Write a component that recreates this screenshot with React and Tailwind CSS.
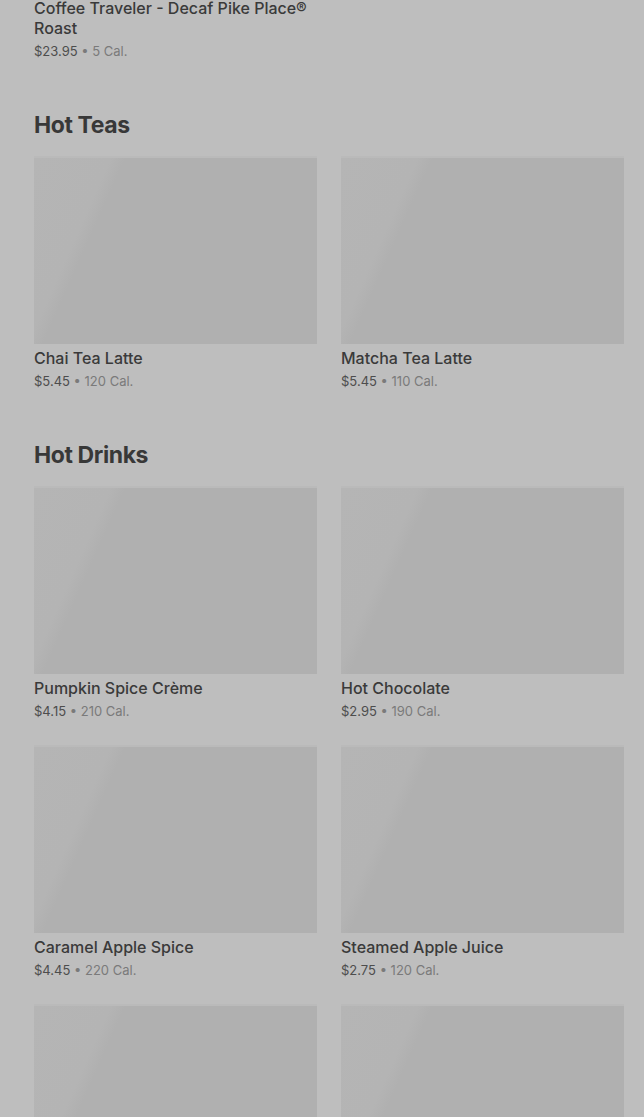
const sections = [
  {
    title: 'Hot Teas',
    items: [
      { name: 'Chai Tea Latte', price: '$5.45', cal: '120 Cal.' },
      { name: 'Matcha Tea Latte', price: '$5.45', cal: '110 Cal.' },
    ],
  },
  {
    title: 'Hot Drinks',
    items: [
      { name: 'Pumpkin Spice Crème', price: '$4.15', cal: '210 Cal.' },
      { name: 'Hot Chocolate', price: '$2.95', cal: '190 Cal.' },
      { name: 'Caramel Apple Spice', price: '$4.45', cal: '220 Cal.' },
      { name: 'Steamed Apple Juice', price: '$2.75', cal: '120 Cal.' },
      { name: '', price: '', cal: '' },
      { name: '', price: '', cal: '' },
    ],
  },
];

function ItemText({ name, price, cal }) {
  return (
    <div className="pt-1">
      <div className="text-[16px] leading-5 font-medium text-[#3a3a3a]">{name}</div>
      <div className="mt-[3px] text-[13px] leading-5 text-[#4d4d4d]">
        {price} <span className="text-[#7a7a7a]">• {cal}</span>
      </div>
    </div>
  );
}

function Card({ item }) {
  return (
    <div>
      <div className="h-[188px] w-full border-t-2 border-[#bababa] bg-[linear-gradient(114deg,#b5b5b5_0%,#b4b4b4_21%,#b0b0b0_25%,#b0b0b0_100%)]" />
      {item.name && <ItemText {...item} />}
    </div>
  );
}

export default function App() {
  return (
    <div className="h-[1117px] w-full overflow-hidden bg-[#bebebe] pl-[34px] pr-[20px] font-['Inter','Liberation_Sans',sans-serif]">
      <div className="-mt-[2px] w-[283px]">
        <div className="text-[16px] leading-5 font-medium text-[#3a3a3a]">
          Coffee Traveler - Decaf Pike Place® Roast
        </div>
        <div className="mt-[3px] text-[13px] leading-5 text-[#4d4d4d]">
          $23.95 <span className="text-[#7a7a7a]">• 5 Cal.</span>
        </div>
      </div>
      {sections.map((s) => (
        <section key={s.title} className="mt-[48px]">
          <h2 className="mb-[15px] h-8 text-[23px] leading-8 font-bold tracking-[-0.4px] text-[#383838]">
            {s.title}
          </h2>
          <div className="grid grid-cols-2 gap-x-6 gap-y-6">
            {s.items.map((it, i) => (
              <Card key={i} item={it} />
            ))}
          </div>
        </section>
      ))}
    </div>
  );
}
